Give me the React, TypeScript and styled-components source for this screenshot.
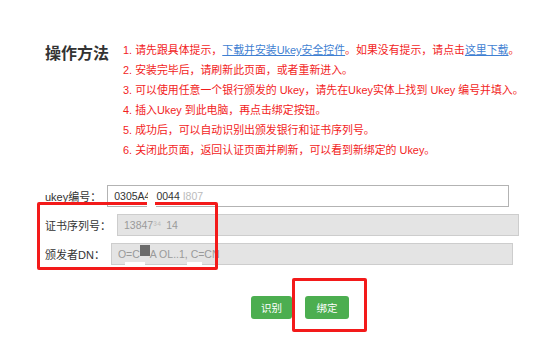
import type { ReactNode } from 'react';
import styled, { createGlobalStyle } from 'styled-components';

const GlobalStyle = createGlobalStyle`
  html, body {
    margin: 0;
    padding: 0;
    background: #fff;
  }
  body {
    font-family: 'Liberation Sans', 'Noto Sans CJK SC', sans-serif;
    color: #333;
  }
`;

function getSteps(): ReactNode[] {
  return [
    <>
      请先跟具体提示，<Link>下载并安装Ukey安全控件</Link>。如果没有提示，请点击<Link>这里下载</Link>。
    </>,
    <>安装完毕后，请刷新此页面，或者重新进入。</>,
    <>可以使用任意一个银行颁发的 Ukey，请先在Ukey实体上找到 Ukey 编号并填入。</>,
    <>插入Ukey 到此电脑，再点击绑定按钮。</>,
    <>成功后，可以自动识别出颁发银行和证书序列号。</>,
    <>关闭此页面，返回认证页面并刷新，可以看到新绑定的 Ukey。</>,
  ];
}

export default function App() {
  const steps = getSteps();

  return (
    <Page>
      <GlobalStyle />
      <Intro>
        <Title>操作方法</Title>
        <Steps>
          {steps.map((step, i) => (
            <Step key={i}>
              {i + 1}. {step}
            </Step>
          ))}
        </Steps>
      </Intro>

      <Form>
        <Row>
          <Label>ukey编号：</Label>
          <Field>
            0305A4<Faded>:</Faded>
            <Gap $w={3} />
            0044<Faded> I807</Faded>
            <Patch style={{ left: 40, top: 0, width: 8, height: 24 }} />
          </Field>
        </Row>
        <Row>
          <Label>证书序列号：</Label>
          <Field $disabled>
            13847<Faded>³⁴</Faded>
            <Gap $w={5} />
            14
          </Field>
        </Row>
        <Row>
          <Label>颁发者DN：</Label>
          <Field $disabled>
            O=C<Block />A OL..1, C=CN
            <Patch style={{ left: 13, top: 18, width: 20, height: 4 }} />
            <Patch style={{ left: 75, top: 18, width: 15, height: 4 }} />
          </Field>
        </Row>
        <Marker style={{ left: 37, top: 17, width: 175, height: 62 }} />
        <Patch style={{ left: 147, top: 15, width: 8, height: 8 }} />
      </Form>

      <Actions>
        <Button>识别</Button>
        <Button $wide>绑定</Button>
        <Marker style={{ left: 292, top: -18, width: 69, height: 48 }} />
      </Actions>
    </Page>
  );
}

const Page = styled.div`
  width: 547px;
  height: 346px;
  padding-top: 40px;
  box-sizing: border-box;
  overflow: hidden;
`;

const Intro = styled.div`
  display: flex;
  padding-left: 45px;
`;

const Title = styled.h1`
  margin: 4px 15px 0 0;
  width: 63px;
  font-size: 16px;
  line-height: 20px;
  font-weight: bold;
  color: #333;
  white-space: nowrap;
`;

const Steps = styled.div`
  display: flex;
  flex-direction: column;
`;

const Step = styled.div`
  font-size: 10.9px;
  line-height: 20px;
  color: #f21d1d;
  white-space: nowrap;
`;

const Link = styled.a`
  color: #3f7fd2;
  text-decoration: underline;
  cursor: pointer;
`;

const Form = styled.div`
  position: relative;
  display: flex;
  flex-direction: column;
  gap: 7px;
  margin-top: 25px;
  padding-left: 45px;
`;

const Row = styled.div`
  display: flex;
  align-items: center;
  height: 22px;
`;

const Label = styled.span`
  font-size: 11px;
  color: #333;
  white-space: nowrap;
`;

const Field = styled.div<{ $disabled?: boolean }>`
  position: relative;
  display: flex;
  align-items: center;
  box-sizing: border-box;
  width: 402px;
  height: 22px;
  margin-left: 6px;
  padding: 0 6px;
  font-size: 10.5px;
  color: ${(p) => (p.$disabled ? '#9a9a9a' : '#333')};
  background: ${(p) => (p.$disabled ? '#e4e4e4' : '#fff')};
  border: 1px solid ${(p) => (p.$disabled ? '#cdcdcd' : '#b3b3b3')};
  white-space: pre;
`;

const Faded = styled.span`
  color: #bbb;
`;

const Gap = styled.span<{ $w: number }>`
  display: inline-block;
  width: ${(p) => p.$w}px;
`;

const Block = styled.span`
  display: inline-block;
  width: 10px;
  height: 11px;
  margin-top: -8px;
  background: #6b6b6b;
`;

const Patch = styled.span`
  position: absolute;
  background: #fff;
`;

const Marker = styled.div`
  position: absolute;
  border: 3px solid #f31a1a;
  border-radius: 2px;
  pointer-events: none;
`;

const Actions = styled.div`
  position: relative;
  display: flex;
  gap: 13px;
  margin-top: 31px;
  padding-left: 251px;
`;

const Button = styled.button<{ $wide?: boolean }>`
  width: ${(p) => (p.$wide ? 44 : 41)}px;
  height: 23px;
  padding: 0;
  border: none;
  border-radius: 3px;
  background: #4cae50;
  color: #fff;
  font-family: 'Liberation Sans', 'Noto Sans CJK SC', sans-serif;
  font-size: 10.5px;
`;
